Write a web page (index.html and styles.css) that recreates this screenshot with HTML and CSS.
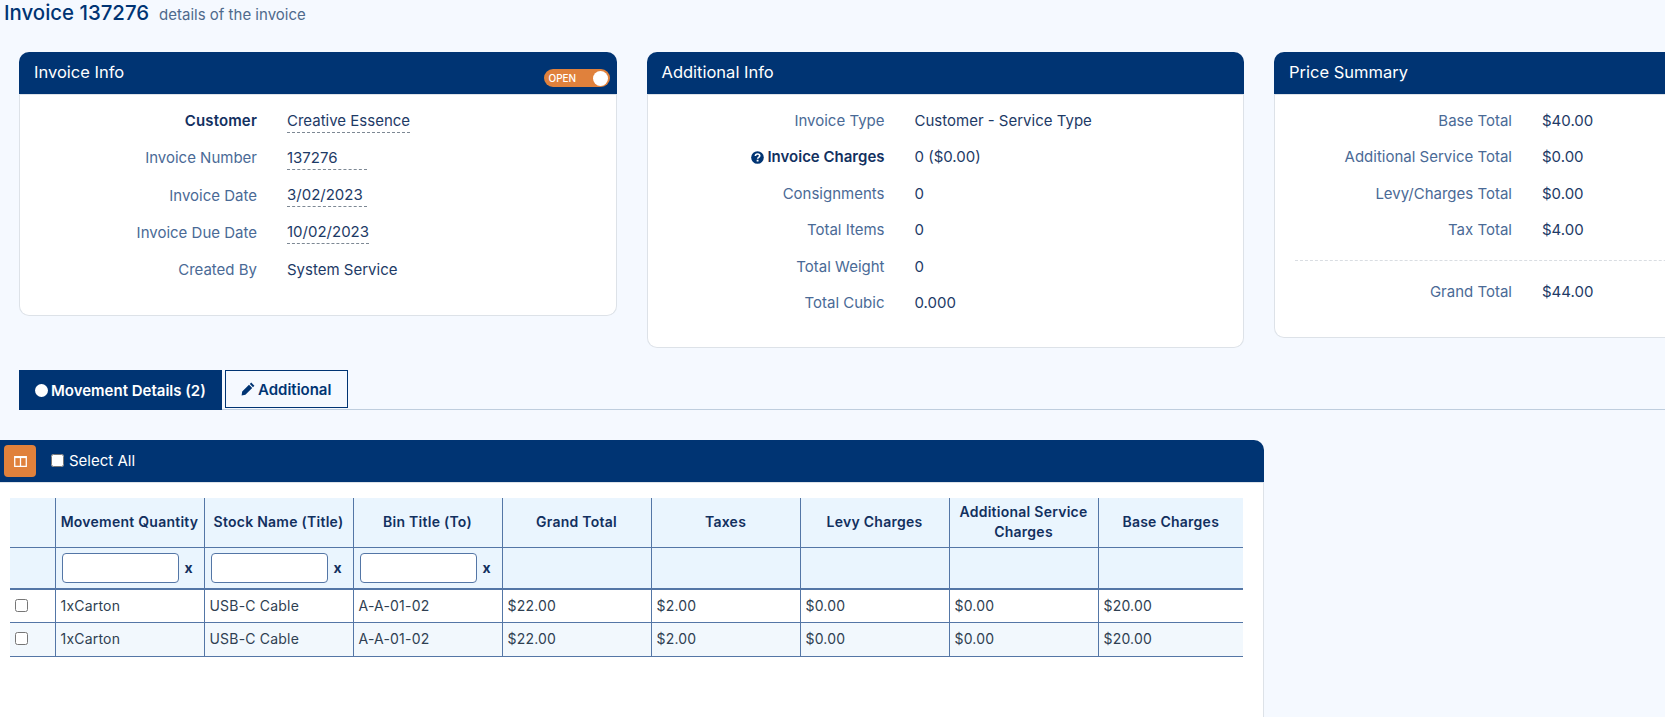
FILE: index.html
```html
<!DOCTYPE html>
<html lang="en">
<head>
    <meta charset="UTF-8">
    <meta name="viewport" content="width=device-width, initial-scale=1.0">
    <title>Invoice 137276</title>
    <link rel="stylesheet" href="styles.css">
</head>
<body>
<div class="page-title">
    <h1>Invoice 137276</h1>
    <span>details of the invoice</span>
</div>

<div class="cards">
    <section class="card card-invoice">
        <header class="card-head">
            <h2>Invoice Info</h2>
            <div class="toggle"><span>OPEN</span><i></i></div>
        </header>
        <div class="card-body">
            <div class="field"><label class="strong">Customer</label><span class="editable">Creative Essence</span></div>
            <div class="field"><label>Invoice Number</label><span class="editable">137276</span></div>
            <div class="field"><label>Invoice Date</label><span class="editable">3/02/2023</span></div>
            <div class="field"><label>Invoice Due Date</label><span class="editable">10/02/2023</span></div>
            <div class="field"><label>Created By</label><span>System Service</span></div>
        </div>
    </section>

    <section class="card card-additional">
        <header class="card-head">
            <h2>Additional Info</h2>
        </header>
        <div class="card-body">
            <div class="field"><label>Invoice Type</label><span>Customer - Service Type</span></div>
            <div class="field">
                <label class="strong">
                    <svg class="help-icon" viewBox="0 0 14 14"><circle cx="7" cy="7" r="6.8" fill="#003473"/><path d="M4.7 5.5c0-1.4 1-2.3 2.4-2.3s2.3.9 2.3 2c0 1.8-2.2 1.6-2.2 3.1" fill="none" stroke="#fff" stroke-width="1.8"/><rect x="6.1" y="9.4" width="2" height="1.9" fill="#fff"/></svg>
                    Invoice Charges
                </label>
                <span>0 ($0.00)</span>
            </div>
            <div class="field"><label>Consignments</label><span>0</span></div>
            <div class="field"><label>Total Items</label><span>0</span></div>
            <div class="field"><label>Total Weight</label><span>0</span></div>
            <div class="field"><label>Total Cubic</label><span>0.000</span></div>
        </div>
    </section>

    <section class="card card-price">
        <header class="card-head">
            <h2>Price Summary</h2>
        </header>
        <div class="card-body">
            <div class="field"><label>Base Total</label><span>$40.00</span></div>
            <div class="field"><label>Additional Service Total</label><span>$0.00</span></div>
            <div class="field"><label>Levy/Charges Total</label><span>$0.00</span></div>
            <div class="field"><label>Tax Total</label><span>$4.00</span></div>
            <hr>
            <div class="field"><label>Grand Total</label><span>$44.00</span></div>
        </div>
    </section>
</div>

<div class="tabs">
    <a class="tab active"><i class="dot"></i>Movement Details (2)</a>
    <a class="tab">
        <svg class="pencil" viewBox="0 0 14 14"><path d="M10.2.6 13.4 3.8 12 5.2 8.8 2ZM8 2.8 11.2 6 4.4 12.8.6 13.4 1.2 9.6Z" fill="#003473"/></svg>
        Additional
    </a>
</div>

<div class="grid-panel">
    <div class="grid-bar">
        <button class="columns-btn">
            <svg viewBox="0 0 14 12"><path d="M.7.7h12.6v10.6H.7zM7 .7v10.6" fill="none" stroke="#fff" stroke-width="1.4"/><path d="M.7.7h12.6v1.6H.7z" fill="#fff"/></svg>
        </button>
        <label class="select-all"><input type="checkbox">Select All</label>
    </div>
    <div class="grid-wrap">
        <table>
            <colgroup>
                <col class="col-check"><col class="col-data"><col class="col-data"><col class="col-data"><col class="col-data"><col class="col-data"><col class="col-data"><col class="col-data"><col class="col-last">
            </colgroup>
            <thead>
                <tr class="head-row">
                    <th></th>
                    <th>Movement Quantity</th>
                    <th>Stock Name (Title)</th>
                    <th>Bin Title (To)</th>
                    <th>Grand Total</th>
                    <th>Taxes</th>
                    <th>Levy Charges</th>
                    <th>Additional Service Charges</th>
                    <th>Base Charges</th>
                </tr>
                <tr class="filter-row">
                    <th></th>
                    <th><div class="filter"><input type="text"><b>x</b></div></th>
                    <th><div class="filter"><input type="text"><b>x</b></div></th>
                    <th><div class="filter"><input type="text"><b>x</b></div></th>
                    <th></th><th></th><th></th><th></th><th></th>
                </tr>
            </thead>
            <tbody>
                <tr>
                    <td class="check"><input type="checkbox"></td>
                    <td>1xCarton</td><td>USB-C Cable</td><td>A-A-01-02</td><td>$22.00</td><td>$2.00</td><td>$0.00</td><td>$0.00</td><td>$20.00</td>
                </tr>
                <tr>
                    <td class="check"><input type="checkbox"></td>
                    <td>1xCarton</td><td>USB-C Cable</td><td>A-A-01-02</td><td>$22.00</td><td>$2.00</td><td>$0.00</td><td>$0.00</td><td>$20.00</td>
                </tr>
            </tbody>
        </table>
    </div>
</div>
</body>
</html>
```

FILE: styles.css
```css
html, body {
    height: 100%;
}
body {
    margin: 0;
    overflow: hidden;
    background: #f5f9ff;
    color: #1d3a66;
    font-family: Inter, "Noto Sans", sans-serif;
    font-size: 15px;
}

.page-title {
    display: flex;
    align-items: baseline;
    gap: 10px;
    height: 26px;
    padding-left: 4px;
}
.page-title h1 {
    margin: 0;
    font-size: 20.4px;
    font-weight: 500;
    line-height: 26px;
    color: #003473;
}
.page-title span {
    color: #4f6a8c;
}

.cards {
    display: flex;
    align-items: flex-start;
    gap: 30px;
    margin: 26px 0 0 19px;
}
.card {
    flex: none;
    width: 597.5px;
    box-sizing: border-box;
    background: #fff;
    border: 1px solid #dde2e8;
    border-top: 0;
    border-radius: 10px;
}
.card-head {
    position: relative;
    height: 42px;
    margin: 0 -1px;
    background: #003473;
    border-radius: 10px 10px 0 0;
    box-shadow: 0 1px 0 #dde2e8;
}
.card-head h2 {
    margin: 0;
    padding-left: 15px;
    color: #fff;
    font-size: 16.5px;
    font-weight: 400;
    line-height: 40px;
}
.card-invoice { height: 264px; }
.card-additional { height: 296px; }
.card-price { height: 286px; }

.card-body {
    padding-top: 16px;
}
.field {
    display: flex;
    align-items: center;
    height: 21px;
    margin-bottom: 15.4px;
}
.card-invoice .field {
    margin-bottom: 16.25px;
}
.field label {
    width: 237px;
    flex: none;
    text-align: right;
    color: #4a6a96;
}
.field label.strong {
    color: #12305f;
    font-weight: 600;
}
.card-invoice label.strong {
    letter-spacing: .15px;
}
.field > span {
    margin-left: 30px;
}
.field > .editable {
    min-width: 80px;
    margin-top: 2px;
    padding-bottom: 1px;
    border-bottom: 1px dashed #7d8894;
    line-height: 20px;
}
.help-icon {
    width: 13px;
    height: 13px;
    vertical-align: -2px;
}
.card hr {
    margin: 20px 0 20px 20px;
    border: 0;
    border-top: 1px dashed #d9dde2;
}

.toggle {
    position: absolute;
    top: 17px;
    right: 7px;
    display: flex;
    align-items: center;
    justify-content: space-between;
    box-sizing: border-box;
    width: 66px;
    height: 18px;
    padding: 0 2px 0 5px;
    background: #e0813c;
    border-radius: 9px;
    color: #fff;
    font-size: 10px;
    font-weight: 500;
}
.toggle i {
    width: 15px;
    height: 15px;
    background: #fff;
    border-radius: 50%;
}

.tabs {
    display: flex;
    gap: 3px;
    margin: 22px 0 0 19px;
    height: 39px;
    border-bottom: 1px solid #bfcede;
}
.tab {
    display: flex;
    align-items: center;
    box-sizing: border-box;
    height: 38px;
    padding: 0 16px 0 15px;
    border: 1px solid #003473;
    color: #003473;
    font-weight: 600;
    white-space: nowrap;
}
.tab.active {
    width: 203px;
    height: 40px;
    padding-right: 0;
    background: #003473;
    color: #fff;
}
.dot {
    flex: none;
    width: 13px;
    height: 13px;
    margin-right: 3px;
    background: #fff;
    border-radius: 50%;
}
.pencil {
    width: 14px;
    height: 14px;
    margin-right: 3px;
}

.grid-panel {
    width: 1264px;
    box-sizing: border-box;
    height: 300px;
    margin-top: 30px;
    background: #fff;
    border-right: 1px solid #dde2e8;
    border-radius: 0 10px 0 0;
}
.grid-bar {
    display: flex;
    align-items: center;
    height: 42px;
    margin-right: -1px;
    padding-left: 4px;
    background: #003473;
    border-radius: 0 10px 0 0;
    box-shadow: 0 1px 0 #dde2e8;
}
.columns-btn {
    display: flex;
    align-items: center;
    justify-content: center;
    width: 32px;
    height: 32px;
    padding: 0;
    background: #e0813c;
    border: 0;
    border-radius: 4px;
}
.columns-btn svg {
    width: 13px;
    height: 11px;
}
.select-all {
    display: flex;
    align-items: center;
    margin: 0 0 2px 15px;
    color: #fff;
}
.select-all input {
    width: 13px;
    height: 13px;
    margin: 0 5px 0 0;
}

.grid-wrap {
    padding: 16px 0 0 10px;
}
table {
    width: 1233px;
    table-layout: fixed;
    border-collapse: collapse;
    font-size: 14px;
}
.col-check { width: 45px; }
.col-data { width: 149px; }
.col-last { width: 145px; }

th, td {
    border-left: 1px solid #5476a6;
    padding: 0;
}
th:first-child, td:first-child {
    border-left: 0;
}
th {
    background: #eaf5fe;
    color: #12305f;
    font-weight: 600;
    letter-spacing: .25px;
    line-height: 20px;
    text-align: center;
}
.head-row th {
    height: 47px;
    border-bottom: 1px solid #5476a6;
    padding: 0 4px 2px;
}
.filter-row th {
    height: 40px;
    border-bottom: 2px solid #5476a6;
}
.filter {
    display: flex;
    align-items: center;
    padding-left: 6px;
}
.filter input {
    width: 117px;
    height: 30px;
    box-sizing: border-box;
    padding: 0;
    background: #fff;
    border: 1px solid #5476a6;
    border-radius: 4px;
}
.filter b {
    margin-left: 6px;
    font-weight: 700;
    color: #12305f;
}
td {
    height: 30px;
    padding: 0 0 2px 5px;
    border-bottom: 1px solid #5476a6;
    color: #2f3f52;
    letter-spacing: .2px;
}
tbody tr:nth-child(even) td {
    height: 31px;
    background: #f2f8fd;
}
td.check input {
    display: block;
    width: 13px;
    height: 13px;
    margin: 0;
}
```
